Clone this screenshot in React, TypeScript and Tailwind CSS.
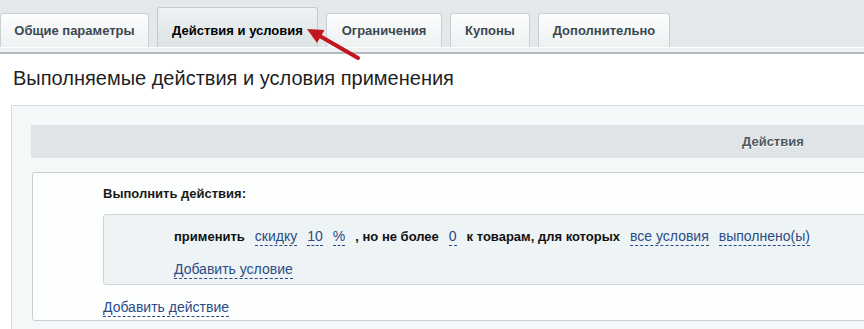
import React from 'react';

const TABS = [
  { label: 'Общие параметры', width: 'w-[149px]' },
  { label: 'Действия и условия', width: 'w-[161px]', active: true },
  { label: 'Ограничения', width: 'w-[116px]' },
  { label: 'Купоны', width: 'w-[80px]' },
  { label: 'Дополнительно', width: 'w-[132px]' },
];

function Link({ children }: { children: React.ReactNode }) {
  return (
    <span className="text-[14px] text-[#2b4b86] font-normal border-b border-dashed border-[#2b4b86] pb-[1px]">
      {children}
    </span>
  );
}

export default function App() {
  return (
    <div className="relative w-[864px] h-[329px] overflow-hidden bg-white font-['Liberation_Sans',Arial,sans-serif] text-[13px]">
      {/* tab strip */}
      <div className="flex items-end gap-[8px] h-[47px] bg-[#e3e9eb]">
        {TABS.map((tab) =>
          tab.active ? (
            <div
              key={tab.label}
              className={`${tab.width} h-[40px] pt-[15px] text-center font-bold leading-[15px] text-black rounded-t-[3px] border border-b-0 border-[#c3cbcf] bg-gradient-to-b from-[#eef2f3] to-[#dce3e5]`}
            >
              {tab.label}
            </div>
          ) : (
            <div
              key={tab.label}
              className={`${tab.width} h-[34px] pt-[9px] text-center font-bold leading-[15px] text-[#3b4850] rounded-t-[3px] border border-b-0 border-[#c8d0d3] bg-gradient-to-b from-[#fdfefe] to-[#edf1f2]`}
            >
              {tab.label}
            </div>
          )
        )}
      </div>
      <div className="h-[7px] bg-[#edf1f2] border-t border-white border-b-2 border-b-[#b3bbbf]" />

      <h1 className="pl-[13px] pt-[12px] h-[51px] text-[20px] leading-[24px] font-normal text-[#1f1f1f]">
        Выполняемые действия и условия применения
      </h1>

      {/* outer panel */}
      <div className="ml-[11px] w-[900px] h-[240px] border border-[#d3d9dc] bg-[#f5f8f9] pt-[19px] pl-[19px]">
        <div className="h-[33px] bg-[#dfe5e6] pl-[711px] pt-[9px] leading-[15px] font-bold text-[#4b595f] [text-shadow:0_1px_0_#ffffff]">
          Действия
        </div>

        <div className="mt-[14px] ml-[1px] w-[900px] h-[149px] rounded-[3px] border border-[#c9cfd2] bg-[#fdfefe] pl-[70px] pt-[13px]">
          <div className="font-bold leading-[15px] text-[#1a1a1a]">Выполнить действия:</div>

          <div className="mt-[13px] h-[71px] rounded-[3px] border border-[#cdd4d8] bg-[#eef3f5] pl-[70px] pt-[13px]">
            <div className="flex items-baseline gap-[10px] font-bold leading-[16px] text-[#111]">
              <span>применить</span>
              <Link>скидку</Link>
              <Link>10</Link>
              <Link>%</Link>
              <span>, но не более</span>
              <Link>0</Link>
              <span>к товарам, для которых</span>
              <Link>все условия</Link>
              <Link>выполнено(ы)</Link>
            </div>
            <div className="mt-[15px] leading-[16px]">
              <Link>Добавить условие</Link>
            </div>
          </div>

          <div className="mt-[14px] leading-[16px]">
            <Link>Добавить действие</Link>
          </div>
        </div>
      </div>

      {/* red pointer arrow */}
      <svg className="absolute left-0 top-0 pointer-events-none" width="864" height="80">
        <line x1="358" y1="58" x2="318" y2="35" stroke="#c1161c" strokeWidth="4" strokeLinecap="round" />
        <polygon points="307,29 324.5,30 317,43" fill="#c1161c" />
      </svg>
    </div>
  );
}
